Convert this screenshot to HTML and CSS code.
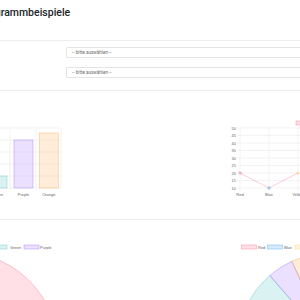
FILE: index.html
```html
<!DOCTYPE html>
<html lang="de">
<head>
    <meta charset="UTF-8">
    <meta name="viewport" content="width=device-width, initial-scale=1.0">
    <title>Diagrammbeispiele</title>
    <link rel="stylesheet" href="styles.css">
</head>
<body>
    <div class="page">
        <h1 class="title">Diagrammbeispiele</h1>

        <div class="card">
            <div class="row">
                <div class="select">-- bitte auswählen --</div>
            </div>
            <div class="row">
                <div class="select">-- bitte auswählen --</div>
            </div>
        </div>

        <div class="charts">
            <!-- bar chart -->
            <svg class="chart" width="150" height="105" viewBox="0 0 150 105">
                <g class="grid">
                    <line x1="0" y1="28" x2="61" y2="28"/>
                    <line x1="0" y1="40" x2="61" y2="40"/>
                    <line x1="0" y1="52" x2="61" y2="52"/>
                    <line x1="0" y1="64" x2="61" y2="64"/>
                    <line x1="0" y1="76" x2="61" y2="76"/>
                    <line x1="0" y1="88" x2="61" y2="88"/>
                    <line x1="10" y1="28" x2="10" y2="90"/>
                    <line x1="36" y1="28" x2="36" y2="90"/>
                    <line x1="61" y1="28" x2="61" y2="90"/>
                </g>
                <rect class="green" x="-12" y="76" width="19" height="12"/>
                <rect class="purple" x="14" y="40" width="19" height="48"/>
                <rect class="orange" x="39.3" y="33" width="19" height="55"/>
                <g class="label">
                    <text x="-2.5" y="95.5">Green</text>
                    <text x="23.5" y="95.5">Purple</text>
                    <text x="48.8" y="95.5">Orange</text>
                </g>
            </svg>

            <!-- line chart -->
            <svg class="chart" width="150" height="105" viewBox="0 0 150 105">
                <rect class="red" x="146" y="21" width="15" height="4"/>
                <g class="grid">
                    <line x1="87" y1="28" x2="150" y2="28"/>
                    <line x1="87" y1="35.5" x2="150" y2="35.5"/>
                    <line x1="87" y1="43" x2="150" y2="43"/>
                    <line x1="87" y1="50.5" x2="150" y2="50.5"/>
                    <line x1="87" y1="58" x2="150" y2="58"/>
                    <line x1="87" y1="65.5" x2="150" y2="65.5"/>
                    <line x1="87" y1="73" x2="150" y2="73"/>
                    <line x1="87" y1="80.5" x2="150" y2="80.5"/>
                    <line x1="87" y1="88" x2="150" y2="88"/>
                    <line x1="90" y1="28" x2="90" y2="91"/>
                    <line x1="119" y1="28" x2="119" y2="91"/>
                    <line x1="148" y1="28" x2="148" y2="91"/>
                </g>
                <g class="ticks">
                    <text x="86" y="29.5">50</text>
                    <text x="86" y="37">45</text>
                    <text x="86" y="44.5">40</text>
                    <text x="86" y="52">35</text>
                    <text x="86" y="59.5">30</text>
                    <text x="86" y="67">25</text>
                    <text x="86" y="74.5">20</text>
                    <text x="86" y="82">15</text>
                    <text x="86" y="89.5">10</text>
                </g>
                <polyline class="line" points="90,73 119,88 148,73"/>
                <circle class="red" cx="90" cy="73" r="1.3"/>
                <circle class="blue" cx="119" cy="88" r="1.3"/>
                <circle class="yellow" cx="148" cy="73" r="1.3"/>
                <g class="label">
                    <text x="90" y="95.5">Red</text>
                    <text x="119" y="95.5">Blue</text>
                    <text x="148" y="95.5">Yellow</text>
                </g>
            </svg>
        </div>

        <hr class="divider">

        <div class="pies">
            <!-- pie left -->
            <svg class="chart" width="150" height="80" viewBox="0 0 150 80">
                <rect class="green" x="-8" y="25" width="15" height="4"/>
                <text class="legend" x="10" y="28.6">Green</text>
                <rect class="purple" x="24" y="25" width="15" height="4"/>
                <text class="legend" x="40" y="28.6">Purple</text>
                <path class="red" d="M-40 130 L-40 32 A98 98 0 0 1 57 143.9 Z"/>
            </svg>

            <!-- pie right -->
            <svg class="chart" width="150" height="80" viewBox="0 0 150 80">
                <rect class="red" x="91.5" y="25" width="15" height="4"/>
                <text class="legend" x="108" y="28.6">Red</text>
                <rect class="blue" x="117.5" y="25" width="15" height="4"/>
                <text class="legend" x="134" y="28.6">Blue</text>
                <rect class="yellow" x="145" y="25" width="15" height="4"/>
                <path class="red" d="M180 125 L180 33 A92 92 0 0 1 271.06 138.09 Z"/>
                <path class="blue" d="M180 125 L271.06 138.09 A92 92 0 0 1 91.74 150.97 Z"/>
                <path class="yellow" d="M180 125 L91.74 150.97 A92 92 0 0 1 88.94 111.88 Z"/>
                <path class="green" d="M180 125 L88.94 111.88 A92 92 0 0 1 119.77 55.48 Z"/>
                <path class="purple" d="M180 125 L119.77 55.48 A92 92 0 0 1 141.85 41.28 Z"/>
                <path class="orange" d="M180 125 L141.85 41.28 A92 92 0 0 1 180 33 Z"/>
            </svg>
        </div>
    </div>
</body>
</html>
```

FILE: styles.css
```css
*{
    margin: 0;
    padding: 0;
    box-sizing: border-box;
}

body{
    background-color: #fff;
    font-family: Roboto, "Liberation Sans", Arial, sans-serif;
    color: #212529;
    overflow: hidden;
}

.page{
    width: 300px;
    height: 300px;
    overflow: hidden;
}

.title{
    margin-left: -20.5px;
    padding-top: 6px;
    font-size: 10.5px;
    line-height: 14px;
    font-weight: 500;
    white-space: nowrap;
}

.card{
    margin-top: 20px;
    padding: 6px 0 12px;
    border-top: 1px solid #eee;
    border-bottom: 1px solid #eee;
    display: flex;
    flex-direction: column;
    gap: 9px;
}

.select{
    margin-left: 66px;
    width: 260px;
    height: 11px;
    padding-left: 5px;
    border: 1px solid #e4e4e4;
    border-radius: 1px;
    font-size: 4.6px;
    line-height: 9px;
    color: #6c6c6c;
    white-space: nowrap;
}

.charts{
    margin-top: 9px;
    display: grid;
    grid-template-columns: 150px 150px;
    height: 105px;
}

.chart{
    display: block;
    overflow: hidden;
}

.divider{
    margin-top: 14px;
    border: 0;
    border-top: 1px solid #eee;
}

.pies{
    display: grid;
    grid-template-columns: 150px 150px;
    height: 80px;
}

.grid line{
    stroke: #e6e6e6;
    stroke-width: 0.5;
}

.label text,
.ticks text,
.legend{
    font-family: "Liberation Sans", Arial, sans-serif;
    font-size: 4px;
    fill: #666;
}

.label text{
    text-anchor: middle;
}

.ticks text{
    text-anchor: end;
}

.line{
    fill: none;
    stroke: rgba(255, 99, 132, 0.55);
    stroke-width: 0.6;
}

.red{
    fill: rgba(255, 99, 132, 0.2);
    stroke: rgba(255, 99, 132, 0.7);
    stroke-width: 0.5;
}

.blue{
    fill: rgba(54, 162, 235, 0.2);
    stroke: rgba(54, 162, 235, 0.7);
    stroke-width: 0.5;
}

.yellow{
    fill: rgba(255, 206, 86, 0.2);
    stroke: rgba(255, 206, 86, 0.7);
    stroke-width: 0.5;
}

.green{
    fill: rgba(75, 192, 192, 0.2);
    stroke: rgba(75, 192, 192, 0.7);
    stroke-width: 0.5;
}

.purple{
    fill: rgba(153, 102, 255, 0.2);
    stroke: rgba(153, 102, 255, 0.7);
    stroke-width: 0.5;
}

.orange{
    fill: rgba(255, 159, 64, 0.2);
    stroke: rgba(255, 159, 64, 0.7);
    stroke-width: 0.5;
}
```
